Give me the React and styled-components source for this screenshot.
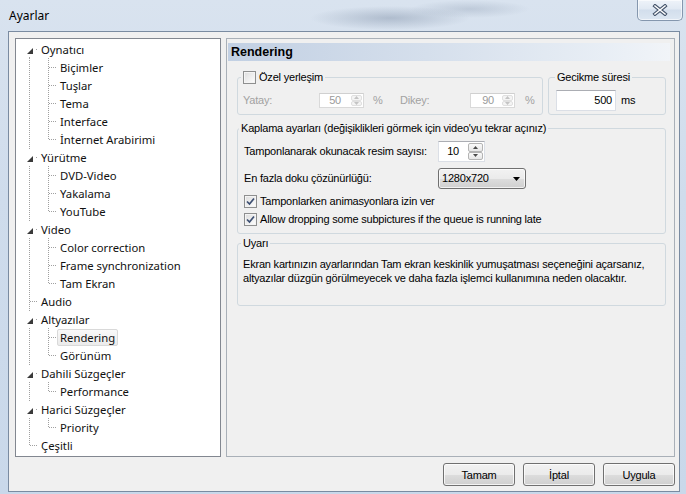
import React from "react";
import styled, { createGlobalStyle } from "styled-components";

const GlobalStyle = createGlobalStyle`
  html, body {
    margin: 0;
    padding: 0;
  }
  body {
    width: 686px;
    height: 494px;
    overflow: hidden;
    background: #d3dfed;
    font-family: "Liberation Sans", Arial, sans-serif;
    font-size: 11px;
    letter-spacing: -0.2px;
    color: #000;
  }
  * {
    box-sizing: border-box;
  }
`;

const Window = styled.div`
  width: 686px;
  height: 494px;
  display: flex;
  flex-direction: column;
  background:
    radial-gradient(ellipse 80px 12px at 390px 18px, rgba(70, 90, 120, 0.28), transparent),
    radial-gradient(ellipse 60px 9px at 470px 9px, rgba(70, 90, 120, 0.18), transparent),
    linear-gradient(to bottom, #d9e3ef, #cfdcec 40%, #c9d8ea);
`;

const TitleBar = styled.div`
  height: 31px;
  flex: none;
  display: flex;
  justify-content: space-between;
  align-items: flex-start;
`;

const Title = styled.span`
  font-family: "Noto Sans", "Open Sans", sans-serif;
  font-size: 12px;
  letter-spacing: 0;
  line-height: 16px;
  margin: 8px 0 0 9px;
`;

const CloseButton = styled.div`
  width: 46px;
  height: 21px;
  margin-right: 3px;
  border: 1px solid #8597ae;
  border-top: none;
  border-radius: 0 0 5px 5px;
  background: linear-gradient(#eef3f9, #e1e9f3 45%, #d2deec 50%, #dde7f2);
  box-shadow: inset 0 0 0 1px rgba(255, 255, 255, 0.6);
  display: flex;
  align-items: center;
  justify-content: center;
`;

const Client = styled.div`
  height: 461px;
  margin: 0 6px 2px 8px;
  border: 1px solid #7a8ba1;
  background: #f0f0f0;
  padding: 6px 4px 5px 6px;
  display: flex;
  flex-direction: column;
`;

const Body = styled.div`
  display: flex;
  gap: 5px;
  height: 419px;
`;

/* ---------- tree ---------- */

const Tree = styled.div`
  width: 206px;
  flex: none;
  border: 1px solid #828790;
  background: #fff;
  padding: 1px 0 0 3px;
  font-family: "Noto Sans", "Open Sans", sans-serif;
  letter-spacing: 0;
`;

const TreeRow = styled.div`
  display: flex;
  height: 18px;
`;

const LineCell = styled.span`
  position: relative;
  flex: none;
  width: 19px;

  &::before {
    content: "";
    position: absolute;
    left: 10px;
    width: 1px;
    top: ${(p) => (p.$v === "bottom" ? "9px" : "0")};
    bottom: ${(p) => (p.$v === "top" ? "9px" : "0")};
    display: ${(p) => (p.$v === "none" ? "none" : "block")};
    background-image: linear-gradient(to bottom, #a0a0a0 50%, transparent 50%);
    background-size: 1px 2px;
  }

  &::after {
    content: "";
    position: absolute;
    top: 9px;
    left: 11px;
    right: 0;
    height: 1px;
    display: ${(p) => (p.$h ? "block" : "none")};
    background-image: linear-gradient(to right, #a0a0a0 50%, transparent 50%);
    background-size: 2px 1px;
  }
`;

const Expander = styled.span`
  position: absolute;
  left: 5px;
  top: 1px;
  width: 11px;
  height: 16px;
  background: #fff;
  z-index: 1;
  display: flex;
  align-items: center;
  justify-content: center;

  svg {
    margin-top: 3px;
  }
`;

const TreeLabel = styled.span`
  align-self: center;
  font-size: 11.3px;
  line-height: 15px;
  padding: 0 2px;
  border: 1px solid ${(p) => (p.$selected ? "#d9d9d9" : "transparent")};
  border-radius: 2px;
  background: ${(p) => (p.$selected ? "linear-gradient(#f9f9f9, #ebebeb)" : "transparent")};
  white-space: nowrap;
  color: #111;
`;

/* ---------- page ---------- */

const Page = styled.div`
  flex: 1;
  border: 1px solid #a9b0b8;
  padding: 4px 4px 0 1px;
  display: flex;
  flex-direction: column;
  align-items: flex-start;
`;

const PageHeader = styled.div`
  align-self: stretch;
  height: 18px;
  padding-left: 3px;
  font-size: 12.5px;
  font-weight: bold;
  letter-spacing: 0;
  line-height: 18px;
  background: linear-gradient(to right, #c2d0e3, #d5dfec 45%, #e8eef5 85%, #f1f4f8);
`;

const TopRow = styled.div`
  display: grid;
  grid-template-columns: 306px 118px;
  column-gap: 5px;
  margin: 16px 0 0 9px;
  width: 429px;
`;

const GroupBox = styled.div`
  position: relative;
  width: ${(p) => (p.$w ? `${p.$w}px` : "auto")};
  margin-top: ${(p) => p.$mt || 0}px;
  margin-left: ${(p) => (p.$ml === undefined ? 9 : p.$ml)}px;
  border: 1px solid #d0d9df;
  border-radius: 3px;
  padding: ${(p) => p.$pad};
  line-height: ${(p) => p.$lh || 15}px;
`;

const Caption = styled.span`
  position: absolute;
  top: -7px;
  left: ${(p) => p.$offset}px;
  display: flex;
  align-items: center;
  gap: 3px;
  height: 13px;
  line-height: 13px;
  padding: 0 2px;
  background: #f0f0f0;
  white-space: nowrap;
`;

const Line = styled.div`
  display: flex;
  align-items: center;
  height: ${(p) => p.$h}px;
  margin-top: ${(p) => p.$mt || 0}px;
  gap: ${(p) => p.$gap || 0}px;
`;

const Text = styled.span`
  flex: none;
  width: ${(p) => (p.$w ? `${p.$w}px` : "auto")};
  margin-left: ${(p) => p.$ml || 0}px;
  color: ${(p) => (p.$disabled ? "#a2a2a2" : "#000")};
  white-space: nowrap;
`;

const SpinBox = styled.div`
  flex: none;
  display: flex;
  width: ${(p) => p.$w}px;
  height: ${(p) => p.$h}px;
  border: 1px solid ${(p) => (p.$disabled ? "#d9d9d9" : "#dbdfe6")};
  border-top-color: ${(p) => (p.$disabled ? "#d0d0d0" : "#abadb3")};
  background: #fff;
  padding: 1px;
`;

const SpinValue = styled.span`
  flex: 1;
  display: flex;
  align-items: center;
  justify-content: flex-end;
  padding-right: ${(p) => p.$pr}px;
  color: ${(p) => (p.$disabled ? "#9a9a9a" : "#000")};
`;

const SpinButtons = styled.span`
  display: flex;
  flex-direction: column;
  width: ${(p) => p.$bw}px;
`;

const SpinBtn = styled.span`
  flex: 1;
  display: flex;
  align-items: center;
  justify-content: center;
  border: 1px solid ${(p) => (p.$disabled ? "#e0e0e0" : "#b4b4b4")};
  border-radius: 2px;
  background: ${(p) =>
    p.$disabled ? "#f4f4f4" : "linear-gradient(#fafafa, #e6e6e6)"};

  svg path {
    fill: ${(p) => (p.$disabled ? "#c4c4c4" : "#4a4a4a")};
  }
`;

const Edit = styled.div`
  flex: none;
  width: ${(p) => p.$w}px;
  height: 21px;
  border: 1px solid #dbdfe6;
  border-top-color: #abadb3;
  background: #fff;
  text-align: right;
  padding-right: 3px;
  line-height: 19px;
`;

const Select = styled.div`
  width: 88px;
  height: 21px;
  border: 1px solid #707070;
  border-radius: 3px;
  background: linear-gradient(#f2f2f2, #ebebeb 50%, #dddddd 51%, #cfcfcf);
  box-shadow: inset 0 0 0 1px rgba(255, 255, 255, 0.7);
  display: flex;
  align-items: center;
  justify-content: space-between;
  padding: 0 5px 0 3px;
`;

const CheckBoxBox = styled.span`
  flex: none;
  width: 13px;
  height: 13px;
  border: 1px solid #8e8f8f;
  background: linear-gradient(135deg, #dcdcdc, #f4f4f4 70%, #fff);
  box-shadow: inset 0 0 0 1px #f4f4f4;
  display: flex;
  align-items: center;
  justify-content: center;
`;

const CheckRow = styled(Line)`
  gap: 3px;
`;

const Note = styled.p`
  margin: 0;
  line-height: 14px;
`;

/* ---------- buttons ---------- */

const ButtonRow = styled.div`
  display: flex;
  justify-content: flex-end;
  gap: 8px;
  margin-top: 6px;
`;

const Button = styled.div`
  width: 72px;
  height: 23px;
  border: 1px solid #707070;
  border-radius: 3px;
  background: linear-gradient(#f2f2f2, #ebebeb 50%, #dddddd 51%, #cfcfcf);
  box-shadow: inset 0 0 0 1px rgba(255, 255, 255, 0.75);
  display: flex;
  align-items: center;
  justify-content: center;
  font-size: 11px;
`;

/* ---------- data ---------- */

const tree = [
  { label: "Oynatıcı", children: ["Biçimler", "Tuşlar", "Tema", "Interface", "İnternet Arabirimi"] },
  { label: "Yürütme", children: ["DVD-Video", "Yakalama", "YouTube"] },
  { label: "Video", children: ["Color correction", "Frame synchronization", "Tam Ekran"] },
  { label: "Audio" },
  { label: "Altyazılar", children: ["Rendering", "Görünüm"] },
  { label: "Dahili Süzgeçler", children: ["Performance"] },
  { label: "Harici Süzgeçler", children: ["Priority"] },
  { label: "Çeşitli" },
];

const rows = [];
tree.forEach((node, i) => {
  const last = i === tree.length - 1;
  rows.push({
    label: node.label,
    level: 0,
    v: i === 0 ? "bottom" : last ? "top" : "full",
    expand: !!node.children,
  });
  (node.children || []).forEach((c, j) => {
    rows.push({
      label: c,
      level: 1,
      parentV: last ? "none" : "full",
      v: j === node.children.length - 1 ? "top" : "full",
    });
  });
});

function Arrow() {
  return (
    <svg width="6" height="6" viewBox="0 0 6 6">
      <path d="M6 0 L6 6 L0 6 Z" fill="#3a3a3a" />
    </svg>
  );
}

function SpinArrow({ up }) {
  return (
    <svg width="5" height="3" viewBox="0 0 5 3">
      <path d={up ? "M0 3 L2.5 0 L5 3 Z" : "M0 0 L5 0 L2.5 3 Z"} />
    </svg>
  );
}

function Spin({ value, w, h, bw, pr, disabled }) {
  return (
    <SpinBox $w={w} $h={h} $disabled={disabled}>
      <SpinValue $pr={pr} $disabled={disabled}>{value}</SpinValue>
      <SpinButtons $bw={bw}>
        <SpinBtn $disabled={disabled}><SpinArrow up /></SpinBtn>
        <SpinBtn $disabled={disabled}><SpinArrow /></SpinBtn>
      </SpinButtons>
    </SpinBox>
  );
}

function CheckBox({ checked }) {
  return (
    <CheckBoxBox>
      {checked && (
        <svg width="9" height="9" viewBox="0 0 9 9">
          <path d="M1 4.5 L3.5 7 L8 1.5" fill="none" stroke="#3d4f72" strokeWidth="1.7" />
        </svg>
      )}
    </CheckBoxBox>
  );
}

function TreeView() {
  return (
    <Tree>
      {rows.map((r) => (
        <TreeRow key={r.label}>
          {r.level === 0 ? (
            <LineCell $v={r.v} $h>
              {r.expand && (
                <Expander>
                  <Arrow />
                </Expander>
              )}
            </LineCell>
          ) : (
            <>
              <LineCell $v={r.parentV} />
              <LineCell $v={r.v} $h />
            </>
          )}
          <TreeLabel $selected={r.label === "Rendering"}>{r.label}</TreeLabel>
        </TreeRow>
      ))}
    </Tree>
  );
}

export default function App() {
  return (
    <>
      <GlobalStyle />
      <Window>
        <TitleBar>
          <Title>Ayarlar</Title>
          <CloseButton>
            <svg width="16" height="12" viewBox="0 0 16 12">
              <path d="M3 2 L13 10 M13 2 L3 10" stroke="#44546b" strokeWidth="3.6" strokeLinecap="square" />
              <path d="M3 2 L13 10 M13 2 L3 10" stroke="#ffffff" strokeWidth="1.6" strokeLinecap="square" />
            </svg>
          </CloseButton>
        </TitleBar>
        <Client>
          <Body>
            <TreeView />
            <Page>
              <PageHeader>Rendering</PageHeader>
              <TopRow>
                <GroupBox $ml={0} $pad="15px 0 6px 5px">
                  <Caption $offset={3}>
                    <CheckBox />
                    Özel yerleşim
                  </Caption>
                  <Line $h={15}>
                    <Text $w={76} $disabled>Yatay:</Text>
                    <Spin value="50" w={45} h={15} bw={11} pr={10} disabled />
                    <Text $w={27} $ml={9} $disabled>%</Text>
                    <Text $w={70} $disabled>Dikey:</Text>
                    <Spin value="90" w={45} h={15} bw={11} pr={8} disabled />
                    <Text $ml={10} $disabled>%</Text>
                  </Line>
                </GroupBox>
                <GroupBox $ml={0} $pad="12px 0 3px 7px">
                  <Caption $offset={6}>Gecikme süresi</Caption>
                  <Line $h={21} $gap={5}>
                    <Edit $w={60}>500</Edit>
                    <Text>ms</Text>
                  </Line>
                </GroupBox>
              </TopRow>

              <GroupBox $w={429} $mt={13} $pad="12px 0 5px 6px">
                <Caption $offset={1}>
                  Kaplama ayarları (değişiklikleri görmek için video'yu tekrar açınız)
                </Caption>
                <Line $h={21}>
                  <Text $w={194}>Tamponlanarak okunacak resim sayısı:</Text>
                  <Spin value="10" w={47} h={21} bw={15} pr={9} />
                </Line>
                <Line $h={21} $mt={6}>
                  <Text $w={194}>En fazla doku çözünürlüğü:</Text>
                  <Select>
                    <span>1280x720</span>
                    <svg width="7" height="4" viewBox="0 0 7 4">
                      <path d="M0 0 L7 0 L3.5 4 Z" fill="#000" />
                    </svg>
                  </Select>
                </Line>
                <CheckRow $h={18} $mt={3}>
                  <CheckBox checked />
                  <Text>Tamponlarken animasyonlara izin ver</Text>
                </CheckRow>
                <CheckRow $h={18}>
                  <CheckBox checked />
                  <Text>Allow dropping some subpictures if the queue is running late</Text>
                </CheckRow>
              </GroupBox>

              <GroupBox $w={429} $mt={9} $pad="13px 6px 20px 5px" $lh={14}>
                <Caption $offset={3}>Uyarı</Caption>
                <Note>
                  Ekran kartınızın ayarlarından Tam ekran keskinlik yumuşatması seçeneğini açarsanız,
                  altyazılar düzgün görülmeyecek ve daha fazla işlemci kullanımına neden olacaktır.
                </Note>
              </GroupBox>
            </Page>
          </Body>
          <ButtonRow>
            <Button>Tamam</Button>
            <Button>İptal</Button>
            <Button>Uygula</Button>
          </ButtonRow>
        </Client>
      </Window>
    </>
  );
}
